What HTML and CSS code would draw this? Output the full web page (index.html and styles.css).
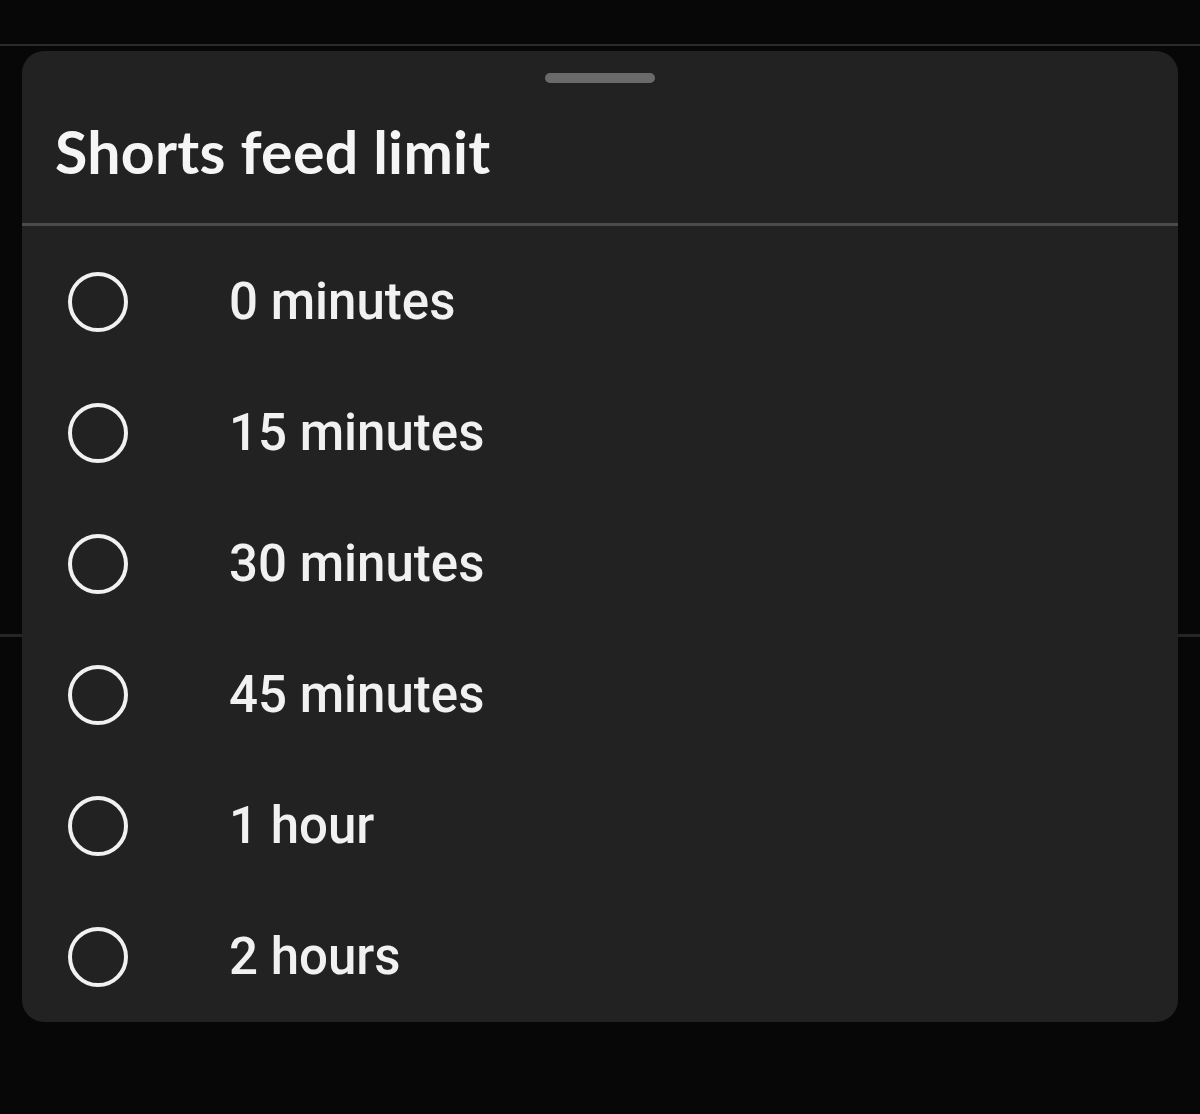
FILE: index.html
```html
<!DOCTYPE html>
<html lang="en">
<head>
<meta charset="utf-8">
<title>Shorts feed limit</title>
<link rel="stylesheet" href="styles.css">
</head>
<body>
<div class="page">
  <div class="rule rule-top"></div>
  <div class="rule rule-mid"></div>
</div>
<div class="sheet">
  <div class="handle"></div>
  <h1 class="title">Shorts feed limit</h1>
  <div class="divider"></div>
  <ul class="options">
    <li class="option"><span class="radio"></span><span class="label">0 minutes</span></li>
    <li class="option"><span class="radio"></span><span class="label">15 minutes</span></li>
    <li class="option"><span class="radio"></span><span class="label">30 minutes</span></li>
    <li class="option"><span class="radio"></span><span class="label">45 minutes</span></li>
    <li class="option"><span class="radio"></span><span class="label">1 hour</span></li>
    <li class="option"><span class="radio"></span><span class="label">2 hours</span></li>
  </ul>
</div>
</body>
</html>
```

FILE: styles.css
```css
* { box-sizing: border-box; }
html, body {
  margin: 0;
  padding: 0;
  background: #070707;
  height: 100%;
}
body {
  position: relative;
  overflow: hidden;
  font-family: Roboto, "Liberation Sans", sans-serif;
  color: #f1f1f1;
}
.page {
  display: flex;
  flex-direction: column;
}
.rule {
  background: #2a2a2a;
}
.rule-top {
  margin-top: 44px;
  height: 2px;
}
.rule-mid {
  margin-top: 588px;
  height: 3px;
  background: #262626;
}
.sheet {
  position: absolute;
  top: 51px;
  left: 22px;
  right: 22px;
  background: #222222;
  border-radius: 22px;
  display: flex;
  flex-direction: column;
}
.handle {
  align-self: center;
  margin-top: 22px;
  width: 110px;
  height: 10px;
  border-radius: 5px;
  background: #6a6a6a;
}
.title {
  margin: 39px 0 0 33px;
  font-family: Lato, "Noto Sans", sans-serif;
  font-weight: 700;
  font-size: 59px;
  letter-spacing: 0.3px;
  line-height: 1;
  height: 59px;
  color: #f5f5f5;
}
.divider {
  margin-top: 42px;
  height: 3px;
  background: #4b4b4b;
}
.options {
  list-style: none;
  margin: 0;
  padding: 10px 0 0 0;
}
.option {
  height: 131px;
  display: flex;
  align-items: center;
}
.radio {
  flex: none;
  margin-left: 46px;
  width: 60px;
  height: 60px;
  border: 4px solid #f1f1f1;
  border-radius: 50%;
}
.label {
  margin-left: 101px;
  font-size: 51px;
  font-weight: 500;
  line-height: 1;
  color: #f1f1f1;
}
```
